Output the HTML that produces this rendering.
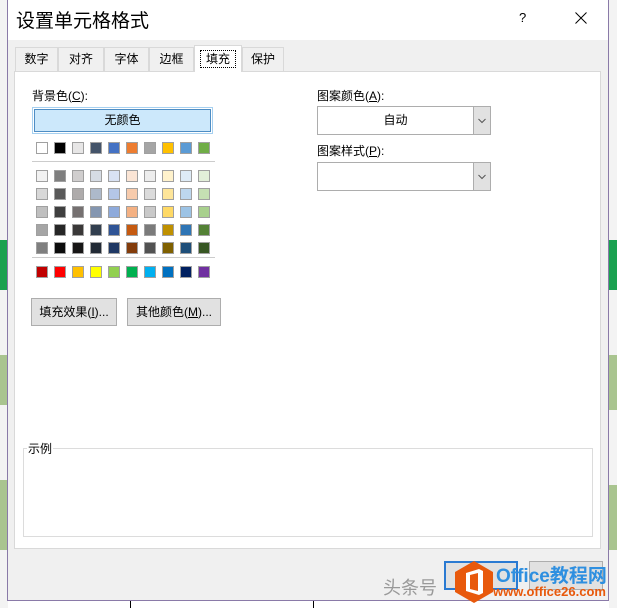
<!DOCTYPE html>
<html><head><meta charset="utf-8"><style>
*{margin:0;padding:0;box-sizing:border-box}
body{width:617px;height:608px;overflow:hidden;background:#fff;position:relative;font-family:"Liberation Sans","Microsoft YaHei","Noto Sans CJK SC",sans-serif;font-size:12px;color:#000}
.a{position:absolute}
.sw{position:absolute;width:12px;height:12px;border:1px solid #a0a0a0}
.btn{position:absolute;background:#e1e1e1;border:1px solid #adadad;text-align:center}
.tab{position:absolute;top:47px;height:24px;border:1px solid #d9d9d9;border-bottom:none;background:#f0f0f0;text-align:center;line-height:23px;font-size:12px}
.combo{position:absolute;background:#fff;border:1px solid #adadad}
.dd{position:absolute;right:0;top:0;bottom:0;width:17px;background:#e1e1e1;border-left:1px solid #adadad}
</style></head><body>
<div class="a" style="left:0;top:0;width:8px;height:608px;background:#f3f3f3"></div>
<div class="a" style="left:0;top:240px;width:8px;height:50px;background:#1aa150"></div>
<div class="a" style="left:0;top:355px;width:8px;height:50px;background:#a9c48f"></div>
<div class="a" style="left:0;top:480px;width:8px;height:70px;background:#a9c48f"></div>
<div class="a" style="left:609px;top:0;width:8px;height:608px;background:#f3f3f3"></div>
<div class="a" style="left:609px;top:240px;width:8px;height:50px;background:#1aa150"></div>
<div class="a" style="left:609px;top:355px;width:8px;height:55px;background:#a9c48f"></div>
<div class="a" style="left:609px;top:485px;width:8px;height:65px;background:#a9c48f"></div>
<div class="a" style="left:130px;top:600px;width:1px;height:8px;background:#000"></div>
<div class="a" style="left:313px;top:600px;width:1px;height:8px;background:#000"></div>
<div class="a" style="left:7px;top:0;width:602px;height:601px;background:#f0f0f0;border:1px solid #8a7aa8;border-top:none"></div>
<div class="a" style="left:8px;top:0;width:600px;height:40px;background:#fff"></div>
<div class="a" style="left:16px;top:6px;font-size:19px">设置单元格格式</div>
<div class="a" style="left:519px;top:10px;font-size:13px">?</div>
<svg class="a" style="left:575px;top:12px" width="12" height="12"><path d="M0.5 0.5 L11.5 11.5 M11.5 0.5 L0.5 11.5" stroke="#000" stroke-width="1"/></svg>
<div class="a" style="left:14px;top:71px;width:587px;height:478px;background:#fff;border:1px solid #d9d9d9"></div>
<div class="tab" style="left:15px;width:43px">数字</div>
<div class="tab" style="left:58px;width:46px">对齐</div>
<div class="tab" style="left:104px;width:45px">字体</div>
<div class="tab" style="left:149px;width:45px">边框</div>
<div class="tab" style="left:194px;top:45px;height:27px;width:48px;background:#fff;line-height:27px"><span style="border:1px dotted #000;padding:1px 5px">填充</span></div>
<div class="tab" style="left:242px;width:42px">保护</div>
<div class="a" style="left:32px;top:87px">背景色(<u>C</u>):</div>
<div class="a" style="left:32px;top:107px;width:181px;height:27px;border:1px solid #a6d0f0"></div>
<div class="a" style="left:34px;top:109px;width:177px;height:23px;background:#cce8fb;border:1px solid #4e8dc4;text-align:center;line-height:21px">无颜色</div>
<div id="sw"></div>
<div class="a" style="left:32px;top:161px;width:183px;height:1px;background:#ccc"></div>
<div class="a" style="left:32px;top:257px;width:183px;height:1px;background:#ccc"></div>
<div class="btn" style="left:31px;top:298px;width:86px;height:28px;line-height:26px">填充效果(<u>I</u>)...</div>
<div class="btn" style="left:127px;top:298px;width:94px;height:28px;line-height:26px">其他颜色(<u>M</u>)...</div>
<div class="a" style="left:317px;top:87px">图案颜色(<u>A</u>):</div>
<div class="combo" style="left:317px;top:106px;width:174px;height:29px"><div style="position:absolute;left:0;right:17px;text-align:center;line-height:27px">自动</div><div class="dd"><svg width="16" height="27"><path d="M4.5 12 L8 15.5 L11.5 12" fill="none" stroke="#555"/></svg></div></div>
<div class="a" style="left:317px;top:142px">图案样式(<u>P</u>):</div>
<div class="combo" style="left:317px;top:162px;width:174px;height:29px"><div class="dd"><svg width="16" height="27"><path d="M4.5 12 L8 15.5 L11.5 12" fill="none" stroke="#555"/></svg></div></div>
<div class="a" style="left:23px;top:448px;width:570px;height:89px;border:1px solid #dcdcdc"></div>
<div class="a" style="left:27px;top:440px;background:#fff;padding:0 1px">示例</div>
<div class="a" style="left:444px;top:561px;width:74px;height:29px;border:2px solid #2a7ad2;background:#e1e1e1"></div>
<div class="a" style="left:529px;top:561px;width:74px;height:29px;border:1px solid #adadad;background:#e1e1e1"></div>
<div class="a" style="left:383px;top:574px;font-size:18px;color:#999">头条号</div>
<svg class="a" style="left:452px;top:560px" width="44" height="44" viewBox="0 0 44 44"><polygon points="22,1 41,12 41,32 22,43 3,32 3,12" fill="#e8590c"/><path d="M14 13 L27 9 L31 11 L31 33 L27 35 L14 31 Z M18 15 V29 L26 31 V13 Z" fill="#fff" fill-rule="evenodd"/></svg>
<div class="a" style="left:496px;top:561px;font-size:19px;font-weight:bold;color:#2e8fe0">Office教程网</div>
<div class="a" style="left:493px;top:584px;font-size:13px;font-weight:bold;color:#e8590c">www.office26.com</div>
<script>
var rows=[
["ffffff","000000","e7e6e6","44546a","4472c4","ed7d31","a5a5a5","ffc000","5b9bd5","70ad47"],
["f2f2f2","7f7f7f","d0cece","d6dce4","d9e2f3","fbe5d5","ededed","fff2cc","deebf6","e2efd9"],
["d8d8d8","595959","aeabab","adb9ca","b4c6e7","f7cbac","dbdbdb","fee599","bdd7ee","c5e0b3"],
["bfbfbf","3f3f3f","757070","8496b0","8eaadb","f4b183","c9c9c9","ffd965","9cc3e5","a8d08d"],
["a5a5a5","262626","3a3838","323f4f","2f5496","c55a11","7b7b7b","bf9000","2e75b5","538135"],
["7f7f7f","0c0c0c","171616","222a35","1f3864","833c0b","525252","7f6000","1e4e79","375623"],
["c00000","ff0000","ffc000","ffff00","92d050","00b050","00b0f0","0070c0","002060","7030a0"]];
var ys=[142,170,188,206,224,242,266],h="";
rows.forEach(function(r,i){r.forEach(function(c,j){h+='<div class="sw" style="left:'+(36+j*18)+'px;top:'+ys[i]+'px;background:#'+c+'"></div>';});});
document.getElementById("sw").innerHTML=h;
</script>
</body></html>
